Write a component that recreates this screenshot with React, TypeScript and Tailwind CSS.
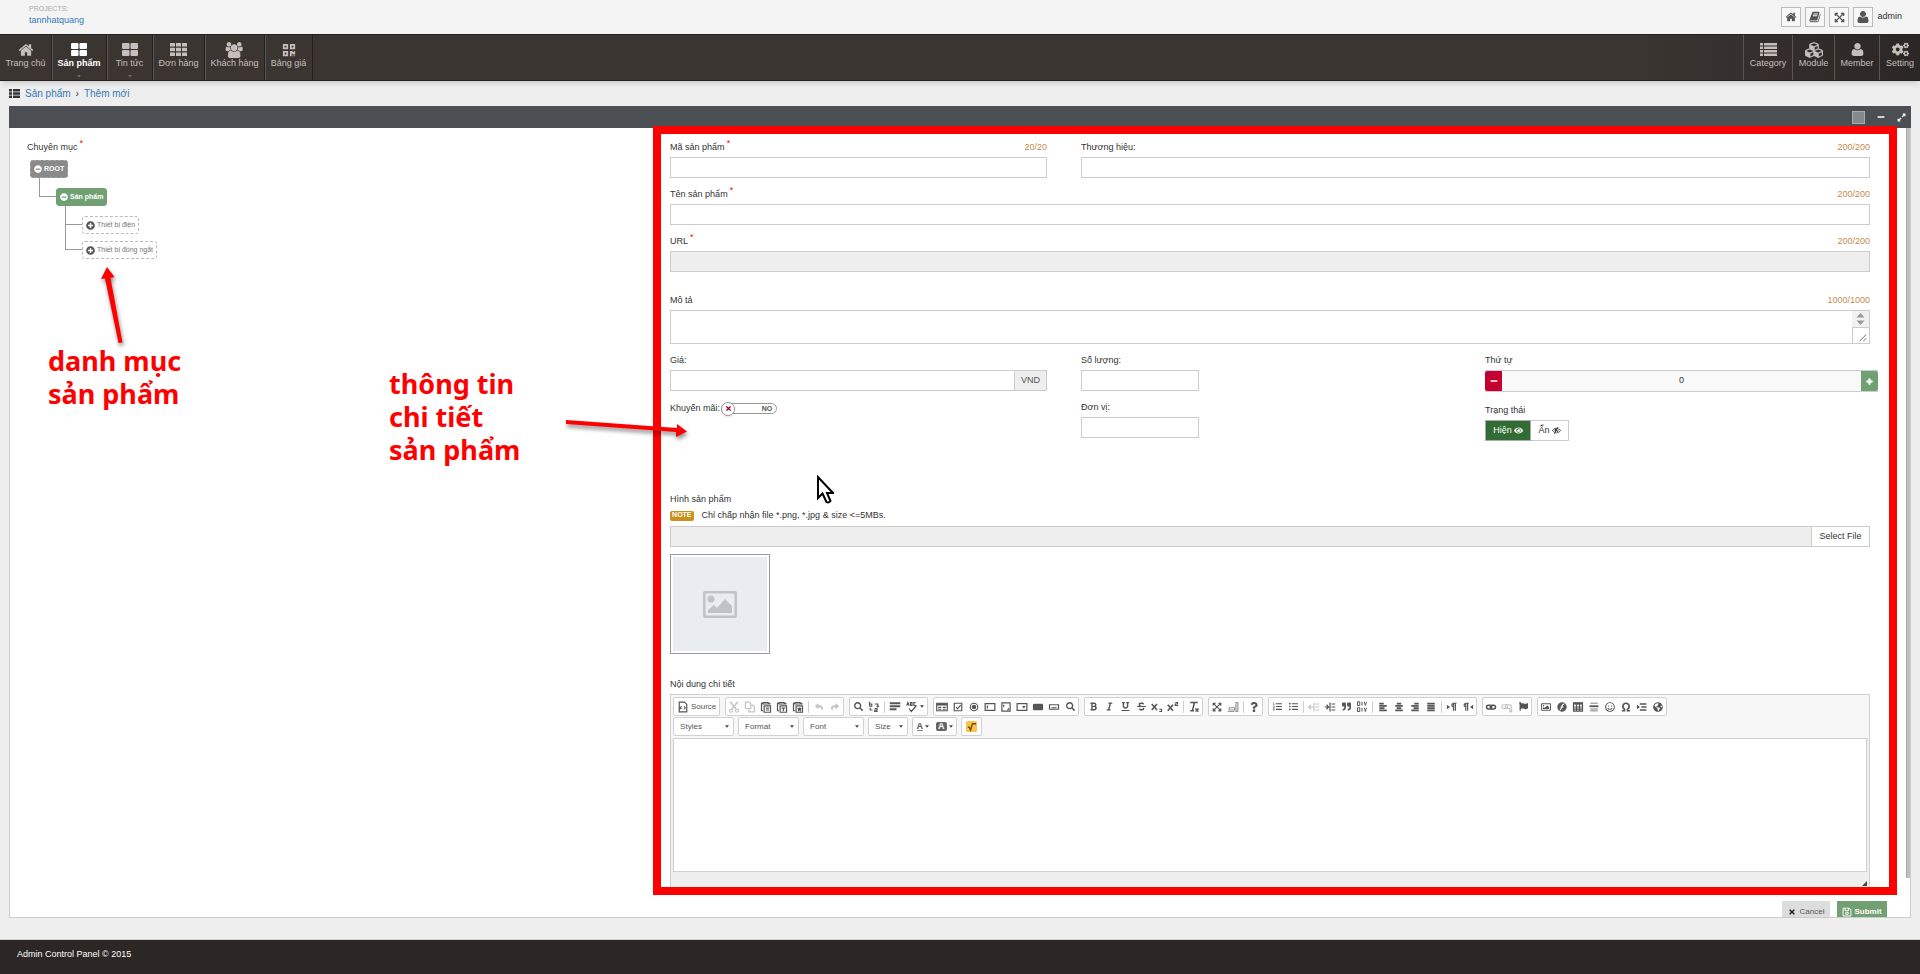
import React, { useState } from "react";
import {
  FaBold, FaItalic, FaUnderline, FaStrikethrough, FaCubes, FaCogs, FaQrcode, FaExpandArrowsAlt, FaExpandAlt,
  FaEye, FaTimes, FaRegSave, FaPlus, FaMinus, FaCut, FaSearch, FaReply, FaShare, FaQuestion,
  FaAlignLeft, FaAlignCenter, FaAlignRight, FaAlignJustify, FaQuoteRight, FaFlag,
  FaRegImage, FaTable, FaRegSmile, FaGlobeAmericas, FaPlusCircle, FaMinusCircle, FaListOl, FaListUl,
} from "react-icons/fa";

type Svg = { className?: string };

const Fa = ({ d, box = "0 0 1792 1792", className = "" }: { d: string; box?: string; className?: string }) => (
  <svg viewBox={box} className={className} fill="currentColor" aria-hidden="true"><path d={d} /></svg>
);

const Home = ({ className }: Svg) => <Fa className={className} d="M1472 992v480q0 26-19 45t-45 19h-384v-384h-256v384h-384q-26 0-45-19t-19-45v-480q0-1 .5-3t.5-3l575-474 575 474q1 2 1 6zm223-69l-62 74q-8 9-21 11h-3q-13 0-21-7l-692-577-692 577q-12 8-24 7-13-2-21-11l-62-74q-8-10-7-23.5t11-21.5l719-599q32-26 76-26t76 26l244 204v-195q0-14 9-23t23-9h192q14 0 23 9t9 23v408l219 182q10 8 11 21.5t-7 23.5z" />;
const User = ({ className }: Svg) => <Fa className={className} d="M1600 1405q0 120-73 189.5t-194 69.5h-874q-121 0-194-69.5t-73-189.5q0-53 3.5-103.5t14-109 26.5-108.5 43-97.5 62-81 85.5-53.5 111.5-20q9 0 42 21.5t74.5 48 108 48 133.5 21.5 133.5-21.5 108-48 74.5-48 42-21.5q61 0 111.5 20t85.5 53.5 62 81 43 97.5 26.5 108.5 14 109 3.5 103.5zm-320-893q0 159-112.5 271.5t-271.5 112.5-271.5-112.5-112.5-271.5 112.5-271.5 271.5-112.5 271.5 112.5 112.5 271.5z" />;
const Users = ({ className }: Svg) => <Fa className={className} box="0 0 2048 1792" d="M657 896q-162 5-265 128h-134q-82 0-138-40.5t-56-118.5q0-353 124-353 6 0 43.5 21t97.5 42.5 119 21.5q67 0 133-23-5 37-5 66 0 159 90 256zm1071 637q0 120-73 189.5t-194 69.5h-874q-121 0-194-69.5t-73-189.5q0-53 3.5-103.5t14-109 26.5-108.5 43-97.5 62-81 85.5-53.5 111.5-20q10 0 43 21.5t73 48 107 48 135 21.5 135-21.5 107-48 73-48 43-21.5q61 0 111.5 20t85.5 53.5 62 81 43 97.5 26.5 108.5 14 109 3.5 103.5zm-1024-1277q0 106-75 181t-181 75-181-75-75-181 75-181 181-75 181 75 75 181zm704 384q0 159-112.5 271.5t-271.5 112.5-271.5-112.5-112.5-271.5 112.5-271.5 271.5-112.5 271.5 112.5 112.5 271.5zm576 225q0 78-56 118.5t-138 40.5h-134q-103-123-265-128 90-97 90-256 0-29-5-66 66 23 133 23 59 0 119-21.5t97.5-42.5 43.5-21q124 0 124 353zm-128-609q0 106-75 181t-181 75-181-75-75-181 75-181 181-75 181 75 75 181z" />;
const Book = ({ className }: Svg) => <Fa className={className} d="M1703 478q40 57 18 129l-275 906q-19 64-76.5 107.5t-122.5 43.5h-923q-77 0-148.5-53.5t-99.5-131.5q-24-67-2-127 0-4 3-27t4-37q1-8-3-21.5t-3-19.5q2-11 8-21t16.5-23.5 16.5-23.5q23-38 45-91.5t30-91.5q3-10 .5-30t-.5-28q3-11 17-28t17-23q21-36 42-92t25-90q1-9-2.5-32t.5-28q4-13 22-30.5t22-22.5q19-26 42.5-84.5t27.5-96.5q1-8-3-25.5t-2-26.5q2-8 9-18t18-23 17-21q8-12 16.5-30.5t15-35 16-36 19.5-32 26.5-23.5 36-11.5 47.5 5.5l-1 3q38-9 51-9h761q74 0 114 56t18 130l-274 906q-36 119-71.5 153.5t-128.5 34.5h-869q-27 0-38 15-11 16-1 43 24 70 144 70h923q29 0 56-15.5t35-41.5l300-987q7-22 5-57 38 15 59 43zm-1064 2q-4 13 2 22.5t20 9.5h608q13 0 25.5-9.5t16.5-22.5l21-64q4-13-2-22.5t-20-9.5h-608q-13 0-25.5 9.5t-16.5 22.5zm-83 256q-4 13 2 22.5t20 9.5h608q13 0 25.5-9.5t16.5-22.5l21-64q4-13-2-22.5t-20-9.5h-608q-13 0-25.5 9.5t-16.5 22.5z" />;
const ThLarge = ({ className }: Svg) => <Fa className={className} box="0 0 16 13" d="M1 0h5.500q1 0 1 1v4q0 1-1 1H1q-1 0-1-1V1q0-1 1-1zM9.500 0H15q1 0 1 1v4q0 1-1 1H9.500q-1 0-1-1V1q0-1 1-1zM1 7h5.500q1 0 1 1v4q0 1-1 1H1q-1 0-1-1V8q0-1 1-1zM9.500 7H15q1 0 1 1v4q0 1-1 1H9.500q-1 0-1-1V8q0-1 1-1z" />;
const Th = ({ className }: Svg) => <Fa className={className} box="0 0 17 13" d="M0 0h5v3.500H0zM6 0h5v3.500H6zM12 0h5v3.500h-5zM0 4.750h5v3.500H0zM6 4.750h5v3.500H6zM12 4.750h5v3.500h-5zM0 9.500h5V13H0zM6 9.500h5V13H6zM12 9.500h5V13h-5z" />;
const List = ({ className }: Svg) => <Fa className={className} box="0 0 17 13" d="M0 0h3v2.500H0zM4 0h13v2.500H4zM0 3.500h3V6H0zM4 3.500h13V6H4zM0 7h3v2.500H0zM4 7h13v2.500H4zM0 10.500h3V13H0zM4 10.500h13V13H4z" />;
const ThList = ({ className }: Svg) => <Fa className={className} box="0 0 11 9" d="M0 0h3v2.500H0zM4 0h7v2.500H4zM0 3.250h3v2.500H0zM4 3.250h7v2.500H4zM0 6.500h3V9H0zM4 6.500h7V9H4z" />;
const EyeSlash = () => (
  <svg viewBox="0 0 18 14" className="w-[9px]" fill="none" stroke="currentColor" strokeWidth="1.800" aria-hidden="true">
    <path d="M1 7c3.500-6 12.500-6 16 0-3.500 6-12.500 6-16 0z" /><circle cx="9" cy="6.500" r="3" fill="currentColor" /><path stroke="#fff" d="M13.500 0L6.500 14" /><path d="M12 0L5 14" />
  </svg>
);

/* Small outline glyphs used only in the editor toolbar (16x16 grid). */
const G = ({ children }: { children: React.ReactNode }) => (
  <svg viewBox="0 0 16 16" className="size-3" fill="none" stroke="currentColor" strokeWidth="1.6" aria-hidden="true">{children}</svg>
);
const Clip = ({ mark }: { mark: React.ReactNode }) => (
  <G><path d="M4 13H2V3h2M11 3h2v2M4 2h7v2H4zM5.500 6.500H14V15H5.500z" />{mark}</G>
);

type Tool = { name: string; icon: React.ReactNode; off?: boolean; wide?: boolean } | "|";
const groups: Tool[][] = [
  [
    { name: "Cut", icon: <G><path strokeWidth="2" d="M3 1l8 10M13 1L5 11" /><circle cx="4" cy="13" r="2" /><circle cx="12" cy="13" r="2" /></G>, off: true },
    { name: "Copy", icon: <G><path d="M2 1.500h5l2 2V10H2zM6.500 10v4.500H14V8l-2.500-2.500H9" /></G>, off: true },
    { name: "Paste", icon: <Clip mark={<path d="M8 9.500h4M8 12h4" />} /> },
    { name: "Paste as text", icon: <Clip mark={<path d="M7.500 9.500h4.500M9.750 9.500v4" />} /> },
    { name: "Paste from Word", icon: <Clip mark={<path d="M8 9l1 3.500 1-2.500 1 2.500 1-3.500" />} /> },
    "|",
    { name: "Undo", icon: <FaReply className="size-2" />, off: true },
    { name: "Redo", icon: <FaShare className="size-2" />, off: true },
  ],
  [
    { name: "Find", icon: <FaSearch className="size-[9px]" /> },
    { name: "Replace", icon: <G><path d="M2 1v6M2 4h3v3H2M9 10h3v4H9v-2h3M6 12H3V9M9 4h4v4M11.500 6.500L13 8l1.500-1.500" /></G> },
    "|",
    { name: "Select all", icon: <G><path strokeWidth="2.500" d="M1 3h14M1 7h14M1 11h9" /></G> },
    { name: "Spell check", icon: <><G><path d="M1 6l1.500-4L4 6M6 2v4h2V2zM13 2h-2.500v4H13M4 10l3 4 7-8" /></G><Caret /></>, wide: true },
  ],
  [
    { name: "Form", icon: <G><path d="M1 3h14v10H1z" /><path strokeWidth="3" d="M1 4.500h14" /><path d="M3 8.500h4M9 8.500h4M3 11h4M9 11h4" /></G> },
    { name: "Checkbox", icon: <G><path d="M3 3h10v10H3zM5.500 8l2 2.500 4-5" /></G> },
    { name: "Radio button", icon: <G><circle cx="8" cy="8" r="5" /><circle cx="8" cy="8" r="2.200" fill="currentColor" /></G> },
    { name: "Text field", icon: <G><path d="M1.500 3.500h13v9h-13zM4.500 6v4" /></G> },
    { name: "Text area", icon: <G><path d="M2.500 2.500h11v11h-11zM5 5v3M12 10l-2 2" /></G> },
    { name: "Selection field", icon: <G><path d="M1.500 3.500h13v9h-13z" /><path d="M8 6.500h5L10.500 10z" fill="currentColor" stroke="none" /></G> },
    { name: "Button", icon: <G><rect x="2" y="4.500" width="12" height="7" rx="1" fill="currentColor" /></G> },
    { name: "Image button", icon: <G><path d="M2 5h12v6H2zM4.500 9h7" /></G> },
    { name: "Hidden field", icon: <FaSearch className="size-[9px]" /> },
  ],
  [
    { name: "Bold", icon: <FaBold className="size-[9px]" /> },
    { name: "Italic", icon: <FaItalic className="size-[9px]" /> },
    { name: "Underline", icon: <FaUnderline className="size-[9px]" /> },
    { name: "Strikethrough", icon: <FaStrikethrough className="size-[9px]" /> },
    { name: "Subscript", icon: <G><path strokeWidth="2.200" d="M1 4l7 8M8 4l-7 8" /><path d="M11 11h3v3h-3" /></G> },
    { name: "Superscript", icon: <G><path strokeWidth="2.200" d="M1 5l7 8M8 5l-7 8" /><path d="M11 2h3v2h-3v2h4" /></G> },
    "|",
    { name: "Remove format", icon: <G><path strokeWidth="2" d="M3 2h10M8.500 2L6 13M3 13h5M10 10l4 4M14 10l-4 4" /></G> },
  ],
  [
    { name: "Maximize", icon: <FaExpandArrowsAlt /> },
    { name: "Show blocks", icon: <G><path opacity="0.600" d="M1 14h9M3 9h7v3H3zM12 2h2.500v12H12z" /></G> },
    "|",
    { name: "About", icon: <FaQuestion /> },
  ],
  [
    { name: "Numbered list", icon: <FaListOl className="size-[9px]" /> },
    { name: "Bulleted list", icon: <FaListUl className="size-[9px]" /> },
    "|",
    { name: "Decrease indent", icon: <G><path d="M8 2v12M10 4h5M10 8h5M10 12h5M7 8H1l3-3M1 8l3 3" /></G>, off: true },
    { name: "Increase indent", icon: <G><path d="M8 2v12M10 4h5M10 8h5M10 12h5M1 8h5L3.500 5M6 8l-2.500 3" /></G> },
    { name: "Block quote", icon: <FaQuoteRight className="size-[9px]" /> },
    { name: "Div container", icon: <G><path strokeWidth="1.300" d="M2 1v5h3V1zM8 1v5M11 1l1.500 5L14 1M2 9v5h3V9zM8 9v5M11 9l1.500 5L14 9" /></G> },
    "|",
    { name: "Align left", icon: <G><path strokeWidth="2.400" d="M3 3.500h6M3 6.500h10M3 9.500h7M3 12.500h10" /></G> },
    { name: "Center", icon: <G><path strokeWidth="2.400" d="M5 3.500h6M3 6.500h10M5 9.500h6M3 12.500h10" /></G> },
    { name: "Align right", icon: <G><path strokeWidth="2.400" d="M7 3.500h6M3 6.500h10M6 9.500h7M3 12.500h10" /></G> },
    { name: "Justify", icon: <G><path strokeWidth="2.400" d="M3 3.500h10M3 6.500h10M3 9.500h10M3 12.500h10" /></G> },
    "|",
    { name: "Left to right", icon: <G><path d="M2 6.500l2 1.500-2 1.500z" fill="currentColor" /><path d="M10 13V3h4M12.500 3v10M10 3.500c-3 0-3 4 0 4" /></G> },
    { name: "Right to left", icon: <G><path d="M14 6.500L12 8l2 1.500z" fill="currentColor" /><path d="M5 13V3h4M7.500 3v10M5 3.500c-3 0-3 4 0 4" /></G> },
  ],
  [
    { name: "Link", icon: <G><rect x="2" y="5.500" width="7" height="5" rx="2.500" strokeWidth="2" /><rect x="7" y="5.500" width="7" height="5" rx="2.500" strokeWidth="2" /></G> },
    { name: "Unlink", icon: <G><rect x="1" y="5" width="8" height="5" rx="2.500" /><rect x="6" y="5" width="8" height="5" rx="2.500" /><path d="M11 11l4 4M15 11l-4 4" /></G>, off: true },
    { name: "Anchor", icon: <FaFlag className="size-[9px]" /> },
  ],
  [
    { name: "Image", icon: <FaRegImage /> },
    { name: "Flash", icon: <G><circle cx="8" cy="8" r="5.500" fill="currentColor" /><path stroke="#fff" d="M11 4c-3 0-3 3-3.500 4.500S6 12 5 12M6 8h4" /></G> },
    { name: "Table", icon: <G><path d="M2 2.500h12v11H2zM2 8h12M2 10.800h12M6 4v10M10 4v10" /><path strokeWidth="2.600" d="M2 3.500h12" /></G> },
    { name: "Horizontal line", icon: <G><path opacity="0.500" strokeWidth="2" d="M3 3h10M3 13h10M3 10.500h10" /><path strokeWidth="2.400" d="M2 7h12" /></G> },
    { name: "Smiley", icon: <FaRegSmile /> },
    { name: "Special character", icon: <G><path strokeWidth="2.200" d="M2.500 13H6v-2C2 8 4 3 8 3s6 5 2 8v2h3.500" /></G> },
    { name: "Page break", icon: <G><path d="M2 6.500L4 8l-2 1.500z" fill="currentColor" /><path strokeWidth="2" d="M5 4h9M7 8h7M5 12h9" /></G> },
    { name: "IFrame", icon: <FaGlobeAmericas /> },
  ],
];

function Caret() {
  return <svg viewBox="0 0 6 4" className="w-1 h-[3px]" fill="#444" aria-hidden="true"><path d="M0 0h6L3 4z" /></svg>;
}

const groupBox = "flex h-[19px] items-center rounded-xs border border-[#d1d1d1] bg-white";

function ToolGroup({ tools }: { tools: Tool[] }) {
  return (
    <div className={groupBox}>
      {tools.map((t, i) =>
        t === "|" ? (
          <span key={i} className="mx-0.5 h-3 w-px bg-[#cfcfcf]" />
        ) : (
          <button key={i} type="button" aria-label={t.name}
            className={`flex h-full items-center justify-center gap-0.5 text-[10px] text-[#555] ${t.wide ? "w-6" : "w-4"} ${t.off ? "opacity-35" : ""}`}>
            {t.icon}
          </button>
        )
      )}
    </div>
  );
}

const fieldBox = "block h-[21px] w-full border border-[#ccc] bg-white px-1 text-[9px] outline-none";

function Label({ id, text, required, count }: { id: string; text: string; required?: boolean; count?: string }) {
  return (
    <div className="flex h-5 items-center justify-between pt-0.5 whitespace-nowrap">
      <label htmlFor={id}>{text}{required && <Star />}</label>
      {count && <span className="text-[#bf8c4f]">{count}</span>}
    </div>
  );
}
const Star = () => <sup className="ml-0.5 text-[9px] leading-none text-[#f00]">*</sup>;

function NavItem({ icon, text, active, caret, className }: { icon: React.ReactNode; text: string; active?: boolean; caret?: boolean; className: string }) {
  return (
    <a href="#" className={`flex h-full flex-col items-center pt-[7px] whitespace-nowrap ${active ? "font-bold text-white" : "text-[#c4bfbc]"} ${className}`}>
      <span className="flex h-[15px] items-center">{icon}</span>
      <span className="leading-3">{text}</span>
      {caret && <svg viewBox="0 0 6 4" className="mt-1.5 w-1" fill="#6b6563" aria-hidden="true"><path d="M0 0h6L3 4z" /></svg>}
    </a>
  );
}

function Node({ text, open, className }: { text: string; open?: boolean; className: string }) {
  return (
    <button type="button" className={`flex h-[18px] items-center gap-0.5 rounded-[3px] border px-[3px] text-[7px] whitespace-nowrap ${className}`}>
      {open ? <FaMinusCircle className="size-2" /> : <FaPlusCircle className="size-[9px] text-[#555]" />}
      {text}
    </button>
  );
}

function Combo({ text, className }: { text: string; className: string }) {
  return (
    <button type="button" className={`${groupBox} justify-between pr-1 pl-1.5 text-[8px] text-[#555] ${className}`}>
      {text}<Caret />
    </button>
  );
}

export default function App() {
  const [order, setOrder] = useState(0);
  return (
    <div className="flex h-screen flex-col overflow-hidden bg-[#eee] font-['Liberation_Sans',Arial,sans-serif] text-[9px] text-[#333]">
      <header className="flex h-[34px] shrink-0 items-center justify-between bg-[#f4f4f4] pr-[18px] pl-[29px]">
        <div className="pb-1 leading-none">
          <div className="text-[7px] text-[#aaa]">PROJECTS:</div>
          <a href="#" className="mt-0.5 block leading-3 text-[#337ab7]">tannhatquang</a>
        </div>
        <div className="flex items-center gap-1 text-[#555]">
          {[["Home", <Home className="size-3" />], ["Guide", <Book className="size-3" />], ["Full screen", <FaExpandArrowsAlt className="size-[11px]" />], ["Account", <User className="size-3.5" />]].map(([n, i]) => (
            <button key={n as string} type="button" aria-label={n as string} className="flex size-5 items-center justify-center border border-[#bbb] bg-[#f8f8f8]">{i}</button>
          ))}
          <span className="text-[#333]">admin</span>
        </div>
      </header>

      <nav className="flex h-[47px] shrink-0 justify-between border-y border-[#24201e] bg-linear-to-r from-[#3b3532] from-85% to-[#2b2725] shadow-md">
        <div className="flex divide-x divide-[#24201e] border-r border-[#24201e]">
          <NavItem className="w-[52px]" text="Trang chủ" icon={<Home className="size-4" />} />
          <NavItem className="w-[55px] shadow-[inset_1px_0_#5a5452]" text="Sản phẩm" active caret icon={<ThLarge className="h-[13px]" />} />
          <NavItem className="w-[46px] shadow-[inset_1px_0_#5a5452]" text="Tin tức" caret icon={<ThLarge className="h-[13px]" />} />
          <NavItem className="w-[52px] shadow-[inset_1px_0_#5a5452]" text="Đơn hàng" icon={<Th className="h-[13px]" />} />
          <NavItem className="w-[60px] shadow-[inset_1px_0_#5a5452]" text="Khách hàng" icon={<Users className="h-4" />} />
          <NavItem className="w-[47px] shadow-[inset_1px_0_#5a5452]" text="Bảng giá" icon={<FaQrcode className="size-[14px]" />} />
        </div>
        <div className="flex divide-x divide-[#5a5452] border-l border-[#5a5452]">
          <NavItem className="w-[49px]" text="Category" icon={<List className="h-[13px]" />} />
          <NavItem className="w-[42px]" text="Module" icon={<FaCubes className="size-[18px]" />} />
          <NavItem className="w-[45px]" text="Member" icon={<User className="size-[15px]" />} />
          <NavItem className="w-10" text="Setting" icon={<FaCogs className="size-[17px]" />} />
        </div>
      </nav>

      <div className="flex h-[25px] shrink-0 items-center pb-px pl-[9px] text-[10px] text-[#337ab7]">
        <ThList className="mr-[5px] h-[9px] text-[#333]" />
        <a href="#">Sản phẩm</a><span className="mx-[5px] text-[#333]">›</span><a href="#">Thêm mới</a>
      </div>

      <main className="relative mx-[9px] mb-[21px] flex min-h-0 flex-1 flex-col border border-[#ccc] bg-white">
        <div className="-mx-px -mt-px flex h-[22px] shrink-0 items-center justify-end gap-3 bg-[#4b4f54] pr-[5px] text-white">
          <button type="button" aria-label="Panel colour" className="size-[13px] border border-[#aaa] bg-[#85888c]" />
          <button type="button" aria-label="Collapse"><FaMinus className="size-2" /></button>
          <button type="button" aria-label="Expand"><FaExpandAlt className="size-[9px]" /></button>
        </div>

        <div className="relative flex min-h-0 flex-1 overflow-hidden pt-[9px]">
          <section className="w-[33.9%] shrink-0 pl-[17px]">
            <div className="flex h-5 items-center pt-0.5"><span>Chuyên mục<Star /></span></div>
            <div className="mt-[3px] ml-[3px]">
              <div className="flex"><Node open text="ROOT" className="border-dashed border-[#aaa] bg-[#8a8a8a] font-bold text-white" /></div>
              <div className="ml-[9px]">
                <div className="flex">
                  <span className="h-[19px] w-[17px] border-b border-l border-[#999]" />
                  <Node open text="Sản phẩm" className="mt-2.5 border-[#71a073] bg-[#71a073] font-bold text-white" />
                </div>
                <div className="ml-[26px]">
                  <div className="flex">
                    <span className="h-[19px] w-[17px] border-b border-l border-[#999]" />
                    <Node text="Thiết bị điện" className="mt-2.5 border-dashed border-[#bbb] text-[#777]" />
                  </div>
                  <div className="flex">
                    <span className="-mt-[9px] h-[25px] w-[17px] border-b border-l border-[#999]" />
                    <Node text="Thiết bị đóng ngắt" className="mt-[7px] border-dashed border-[#bbb] text-[#777]" />
                  </div>
                </div>
              </div>
            </div>
          </section>

          <form className="flex min-w-0 flex-1 flex-col pr-10 pl-4" onSubmit={(e) => e.preventDefault()}>
            <div className="flex flex-col gap-1.5">
              <div className="grid grid-cols-[377fr_789fr] gap-[34px]">
                <div><Label id="code" text="Mã sản phẩm" required count="20/20" /><input id="code" className={fieldBox} /></div>
                <div><Label id="brand" text="Thương hiệu:" count="200/200" /><input id="brand" className={fieldBox} /></div>
              </div>
              <div><Label id="name" text="Tên sản phẩm" required count="200/200" /><input id="name" className={fieldBox} /></div>
              <div><Label id="url" text="URL" required count="200/200" /><input id="url" disabled className="block h-[21px] w-full border border-[#ccc] bg-[#eee]" /></div>
              <div className="mt-3">
                <Label id="desc" text="Mô tả" count="1000/1000" />
                <div className="relative">
                  <textarea id="desc" className="block h-[34px] w-full resize-none border border-[#ccc] bg-white outline-none" />
                  <div className="pointer-events-none absolute inset-y-px right-px flex w-[17px] flex-col border-[#ccc] text-[#999]">
                    <svg viewBox="0 0 17 16" className="h-4 bg-[#f1f1f1]" fill="#999" aria-hidden="true"><path d="M4.500 6.500h8l-4-4.500zM4.500 9.500h8l-4 4.500z" /></svg>
                    <svg viewBox="0 0 17 16" className="h-4 border-t border-l border-[#ccc]" stroke="#666" fill="none" aria-hidden="true"><path d="M7 14l7-7M11 14l3-3" /></svg>
                  </div>
                </div>
              </div>
              <div className="grid grid-cols-[377fr_370fr_385fr] gap-[34px]">
                <div>
                  <Label id="price" text="Giá:" />
                  <div className="flex">
                    <input id="price" className={fieldBox} />
                    <span className="flex w-8 shrink-0 items-center justify-center border border-l-0 border-[#ccc] bg-[#eee] text-[#555]">VND</span>
                  </div>
                  <div className="mt-[11px] flex items-center gap-px">
                    <label htmlFor="promo">Khuyến mãi:</label>
                    <button id="promo" type="button" role="switch" aria-checked="false" className="flex h-[11px] w-14 items-center justify-between rounded-full border border-[#999] bg-white pr-1 text-[7px] font-bold text-[#555]">
                      <span className="-ml-px flex size-3.5 items-center justify-center rounded-full border border-[#999] bg-white text-[#b0002a] shadow-sm"><FaTimes className="size-[7px]" /></span>
                      NO
                    </button>
                  </div>
                </div>
                <div className="flex flex-col gap-1.5">
                  <div><Label id="qty" text="Số lượng:" /><input id="qty" className="block h-[21px] w-[118px] border border-[#ccc] bg-white" /></div>
                  <div><Label id="unit" text="Đơn vị:" /><input id="unit" className="block h-[21px] w-[118px] border border-[#ccc] bg-white" /></div>
                </div>
                <div>
                  <Label id="order" text="Thứ tự" />
                  <div className="-mr-2 flex h-[22px] border-y border-[#ccc] bg-[#f9f9f9]">
                    <button type="button" aria-label="Decrease" onClick={() => setOrder(order - 1)} className="flex w-[17px] shrink-0 items-center justify-center rounded-l-xs bg-[#c40030] text-white"><FaMinus className="size-2" /></button>
                    <input id="order" value={order} readOnly className="min-w-0 flex-1 text-center outline-none" />
                    <button type="button" aria-label="Increase" onClick={() => setOrder(order + 1)} className="flex w-[17px] shrink-0 items-center justify-center rounded-r-xs bg-[#71a073] text-white"><FaPlus className="size-[7px]" strokeWidth={60} stroke="currentColor" /></button>
                  </div>
                  <div className="mt-2 flex h-5 items-center pt-0.5">Trạng thái</div>
                  <div className="flex">
                    <button type="button" className="flex h-[21px] w-[46px] items-center justify-center gap-0.5 border border-[#aaa] bg-[#306c33] text-white">Hiện <FaEye /></button>
                    <button type="button" className="flex h-[21px] w-[38px] items-center justify-center gap-0.5 border border-l-0 border-[#ccc] bg-white">Ẩn <EyeSlash /></button>
                  </div>
                </div>
              </div>
            </div>

            <div className="mt-12">
              <Label id="file" text="Hình sản phẩm" />
              <div className="mb-1 flex h-[13px] items-center gap-2">
                <span className="flex h-2.5 items-center rounded-xs bg-[#c8921c] px-[2px] text-[7px] font-bold text-white">NOTE</span>
                <span>Chỉ chấp nhận file *.png, *.jpg &amp; size &lt;=5MBs.</span>
              </div>
              <div className="flex">
                <input id="file" disabled className="h-[21px] min-w-0 flex-1 border border-[#ccc] bg-[#eee]" />
                <button type="button" className="w-[58px] border border-l-0 border-[#ccc] bg-white">Select File</button>
              </div>
              <div className="mt-[7px] flex size-[100px] border border-[#999] bg-white p-0.5">
                <div className="flex flex-1 items-center justify-center bg-[#e9ecf1]">
                  <svg viewBox="0 0 34 27" className="w-[34px]" fill="#bfc2c6" role="img" aria-label="No image">
                    <path fillRule="evenodd" d="M2 0h30q2 0 2 2v23q0 2-2 2H2q-2 0-2-2V2q0-2 2-2zM2.500 2.500v22h29v-22z" />
                    <circle cx="8" cy="8" r="3.500" /><path d="M5 22v-3l6-5 3 3 8-9 7 7v7z" />
                  </svg>
                </div>
              </div>
            </div>

            <div className="mt-5">
              <Label id="detail" text="Nội dung chi tiết" />
              <div className="border border-[#d1d1d1] bg-[#eee]">
                <div className="flex flex-col gap-px bg-[#f7f7f7] p-0.5">
                  <div className="flex gap-[5px]">
                    <button type="button" className={`${groupBox} w-[47px] justify-center gap-0.5 text-[8px] text-[#555]`}>
                      <G><path d="M3 1.500h7l3 3v10H3zM6 7l-1.500 2L6 11M9.500 7L11 9l-1.500 2" /></G>Source
                    </button>
                    {groups.map((g, i) => <ToolGroup key={i} tools={g} />)}
                  </div>
                  <div className="flex gap-1">
                    <Combo text="Styles" className="w-[61px]" />
                    <Combo text="Format" className="w-[61px]" />
                    <Combo text="Font" className="w-[61px]" />
                    <Combo text="Size" className="w-10" />
                    <div className={`${groupBox} w-[45px] justify-around text-[#555]`}>
                      <button type="button" aria-label="Text colour" className="flex items-center gap-0.5"><span className="border-b border-[#888] leading-2 font-bold">A</span><Caret /></button>
                      <button type="button" aria-label="Background colour" className="flex items-center gap-0.5"><span className="rounded-xs bg-[#666] px-0.5 leading-[9px] font-bold text-white">A</span><Caret /></button>
                    </div>
                    <div className={`${groupBox} px-1`}>
                      <button type="button" aria-label="Math formula"><svg viewBox="0 0 12 12" className="size-[11px]"><rect width="12" height="12" rx="2" fill="#fbc34a" /><path d="M2 7l1.500-.500L5 10l2-7h4" fill="none" stroke="#6b4a10" strokeWidth="1.400" /></svg></button>
                    </div>
                  </div>
                </div>
                <div className="mx-0.5 h-[134px] border border-[#d1d1d1] bg-white" id="detail" contentEditable suppressContentEditableWarning role="textbox" aria-label="Nội dung chi tiết" />
                <div className="flex h-5 items-start justify-end pt-[9px] pr-0.5"><svg viewBox="0 0 5 5" className="size-[5px]" fill="#444" aria-hidden="true"><path d="M5 0v5H0z" /></svg></div>
              </div>
            </div>

            <div className="-mr-[17px] mt-2 flex justify-end gap-[7px]">
              <button type="button" className="flex h-[21px] w-12 shrink-0 items-center justify-center gap-1 bg-[#ddd] text-[8px] text-[#555]"><FaTimes className="size-2 text-[#222]" />Cancel</button>
              <button type="submit" className="flex h-[21px] w-[50px] shrink-0 items-center justify-center gap-0.5 bg-[#71a073] text-[8px] font-bold text-white"><FaRegSave className="size-2.5" />Submit</button>
            </div>
          </form>
          <div className="absolute top-0 -right-px h-[95%] w-[5px] border-l border-[#aaa] bg-[#c0c0c0]" />
        </div>

        <div className="pointer-events-none absolute top-[19px] right-[13px] bottom-[22px] left-[33.9%] -ml-px border-8 border-[#f00]" />
        <p className="absolute top-[237px] left-[38px] w-36 font-['Noto_Sans',sans-serif] text-[27px] leading-[33px] font-bold text-[#f00]">danh mục sản phẩm</p>
        <p className="absolute top-[260px] left-[379px] w-36 font-['Noto_Sans',sans-serif] text-[27px] leading-[33px] font-bold text-[#f00]">thông tin chi tiết<br />sản phẩm</p>
        <svg viewBox="0 0 24 80" className="absolute top-[160px] left-[91px] w-6 drop-shadow-[1px_3px_2px_rgba(0,0,0,0.45)]" fill="#f00" aria-hidden="true"><path d="M6 0L0 12l4-.500L17.500 76l4-.500L9.500 11l4-1z" /></svg>
        <svg viewBox="0 0 124 20" className="absolute top-[310px] left-[556px] w-[124px] drop-shadow-[1px_3px_2px_rgba(0,0,0,0.45)]" fill="#f00" aria-hidden="true"><path d="M0 3v4l110 8v5l11-5.500L111 7v4z" /></svg>
        <svg viewBox="0 0 17 29" className="absolute top-[368px] left-[807px] w-[17px]" fill="#fff" stroke="#000" strokeWidth="2" aria-hidden="true"><path d="M1 2v21l4.500-4.500 4 8.500q2 1.500 4-1l-3.500-8H16z" /></svg>
      </main>

      <footer className="flex h-[35px] shrink-0 items-center border-t border-[#ccc] bg-[#2c2725] pb-1 pl-[17px] text-white">
        Admin Control Panel © 2015
      </footer>
    </div>
  );
}
